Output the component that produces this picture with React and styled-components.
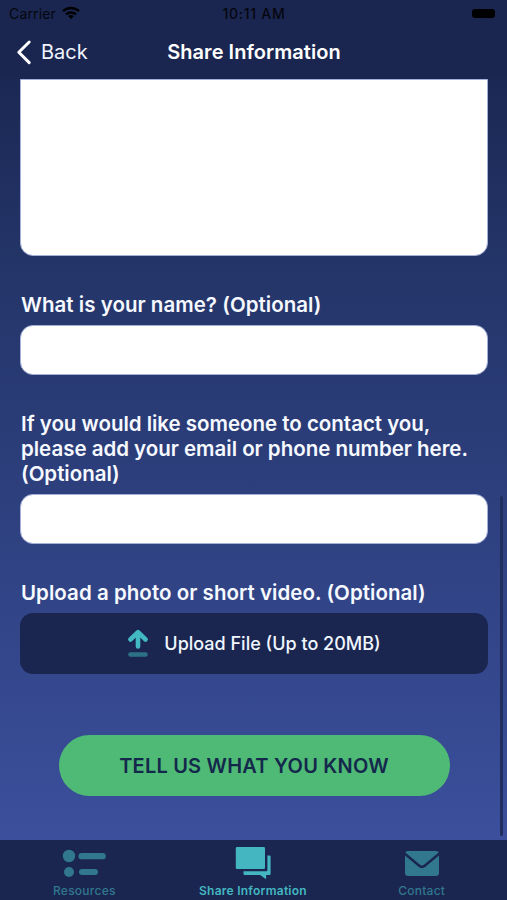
import React from 'react';
import styled, { createGlobalStyle } from 'styled-components';

const navy = '#1a264f';
const teal = '#43b6c1';
const mutedTeal = '#31788f';

const GlobalStyle = createGlobalStyle`
  * {
    box-sizing: border-box;
  }

  body {
    margin: 0;
    background: ${navy};
    font-family: Inter, "Liberation Sans", sans-serif;
  }
`;

const Screen = styled.div`
  display: flex;
  flex-direction: column;
  width: 507px;
  height: 900px;
  overflow: hidden;

  background: linear-gradient(#1b2854 79px, #243569 270px, #3b4f9c 840px);
`;

const StatusBar = styled.div`
  display: grid;
  grid-template-columns: 1fr auto 1fr;
  align-items: center;
  height: 28px;
  padding: 0 10px 2px 9px;

  color: #05070f;
  background: ${navy};
  font-size: 14px;
`;

const Carrier = styled.div`
  display: flex;
  align-items: center;
  gap: 6px;

  letter-spacing: 0.15px;
`;

const Clock = styled.div`
  padding-left: 2px;

  font-weight: 500;
  letter-spacing: 0.75px;
`;

const Battery = styled.div`
  justify-self: end;
  width: 23px;
  height: 9px;
  margin-right: 2px;

  border-radius: 3px;
  background: #000;
`;

const NavBar = styled.header`
  display: grid;
  grid-template-columns: 1fr auto 1fr;
  align-items: center;
  height: 51px;
  padding: 0 15px 3px 16px;

  color: #fff;
  background: ${navy};
`;

const BackButton = styled.button`
  display: flex;
  align-items: center;
  gap: 7px;
  padding: 0;

  border: 0;
  color: #f0f4ff;
  background: transparent;
  font: inherit;
  font-size: 20px;
  line-height: 26px;
`;

const Title = styled.h1`
  margin: 0;

  font-size: 20px;
  font-weight: 600;
  line-height: 26px;
  letter-spacing: 0.05px;
`;

const Content = styled.main`
  position: relative;
  flex: 1;
  display: flex;
  flex-direction: column;
  padding: 0 19px 0 20px;
`;

const Message = styled.textarea`
  display: block;
  width: 100%;
  height: 177px;
  padding: 12px;

  border: 1px solid #a5b0d8;
  border-radius: 0 0 13px 13px;
  background: #fff;
  resize: none;
`;

const Field = styled.div`
  display: flex;
  flex-direction: column;
  gap: 7px;
  margin-top: 37.2px;
`;

const Label = styled.label`
  padding-left: 1px;

  color: #f6f9ff;
  font-size: 20.5px;
  font-weight: 600;
  line-height: 24.8px;
  letter-spacing: ${props => props.$spacing || '0'};
`;

const Input = styled.input`
  width: 100%;
  height: 50px;
  padding: 0 12px;

  border: 1px solid #a5b0d8;
  border-radius: 13px;
  background: #fff;
`;

const UploadButton = styled.button`
  display: flex;
  align-items: center;
  justify-content: center;
  gap: 15px;
  height: 61px;

  border: 0;
  border-radius: 13px;
  color: #f0f6ff;
  background: ${navy};
  font: inherit;
  font-size: 18px;
  font-weight: 500;
`;

const SubmitButton = styled.button`
  align-self: center;
  width: 391px;
  height: 61px;
  margin-top: 61.4px;
  padding: 2px 0 0;

  border: 0;
  border-radius: 31px;
  color: #14284c;
  background: #4fba75;
  font: inherit;
  font-size: 20px;
  font-weight: 600;
  letter-spacing: 0.2px;
`;

const ScrollThumb = styled.div`
  position: absolute;
  right: 4px;
  bottom: 4px;
  width: 3.5px;
  height: 340px;

  border-radius: 2px;
  background: #202f60;
`;

const TabBar = styled.nav`
  display: grid;
  grid-template-columns: repeat(3, 1fr);
  height: 60px;
  padding-right: 1px;

  background: ${navy};
`;

const Tab = styled.button`
  display: flex;
  flex-direction: column;
  align-items: center;
  padding: 4px 0 0;

  border: 0;
  color: ${props => (props.$active ? teal : mutedTeal)};
  background: transparent;
  font: inherit;
  font-size: 12px;
  font-weight: ${props => (props.$active ? 600 : 500)};
  line-height: 16px;
  letter-spacing: 0.25px;

  svg {
    display: block;
    margin-bottom: 1px;
    flex-shrink: 0;
  }
`;

function WifiIcon() {
  return (
    <svg width="18" height="14" viewBox="0 0 18 14" fill="none" stroke="#000" strokeWidth="2.5">
      <path d="M1 5.2C5.6 .9 12.4 .9 17 5.2" />
      <path d="M4 8.4C6.8 5.8 11.2 5.8 14 8.4" />
      <path d="M9 13 6.2 10.2C7.8 8.7 10.2 8.7 11.8 10.2Z" fill="#000" stroke="none" />
    </svg>
  );
}

function ChevronIcon() {
  return (
    <svg width="18" height="26" viewBox="0 0 18 26" fill="none">
      <path d="M13.2 3 2.8 13.2 13.2 23.6" stroke="#fff" strokeWidth="3" strokeLinecap="round" strokeLinejoin="round" />
    </svg>
  );
}

function UploadIcon() {
  return (
    <svg width="22" height="30" viewBox="0 0 22 30" fill="none" strokeLinecap="round" strokeLinejoin="round">
      <path d="M11 4.2V18.4M3.4 11.5 11 4.2 18.6 11.5" stroke="#42b8c3" strokeWidth="4.6" />
      <path d="M3.5 26.5H18.5" stroke="#2d7187" strokeWidth="4.6" />
    </svg>
  );
}

function ListIcon() {
  return (
    <svg width="44" height="38" viewBox="0 0 44 38" fill={mutedTeal}>
      <circle cx="7" cy="12" r="6.2" />
      <rect x="16.5" y="9" width="27.3" height="6.3" rx="3.15" />
      <circle cx="7" cy="28" r="5" />
      <rect x="17" y="25" width="19" height="6" rx="3" />
    </svg>
  );
}

function ChatIcon() {
  return (
    <svg width="36" height="38" viewBox="0 0 36 38" fill={teal}>
      <rect x=".8" y="3" width="29.2" height="22" rx="1.2" />
      <path d="M32.4 11.5H34.4Q35.6 11.5 35.6 12.7V29.8Q35.6 31 34.4 31H31.1V35.2L25.2 31H9.7Q8.5 31 8.5 29.8V27.2H31.4Q32.4 27.2 32.4 26.2Z" />
    </svg>
  );
}

function MailIcon() {
  return (
    <svg width="34" height="38" viewBox="0 0 34 38">
      <rect y="7" width="34" height="25" rx="3" fill={mutedTeal} />
      <path d="M-1 9 14.3 21.8Q17 24 19.7 21.8L35 9" fill="none" stroke={navy} strokeWidth="2.5" />
    </svg>
  );
}

function TextField({ id, label, spacing }) {
  return (
    <Field>
      <Label htmlFor={id} $spacing={spacing}>
        {label}
      </Label>
      <Input id={id} />
    </Field>
  );
}

function App() {
  return (
    <Screen>
      <GlobalStyle />
      <StatusBar>
        <Carrier>
          Carrier
          <WifiIcon />
        </Carrier>
        <Clock>10:11 AM</Clock>
        <Battery />
      </StatusBar>
      <NavBar>
        <BackButton>
          <ChevronIcon />
          Back
        </BackButton>
        <Title>Share Information</Title>
      </NavBar>
      <Content>
        <Message aria-label="Message" />
        <TextField id="name" label="What is your name? (Optional)" spacing="0.03px" />
        <TextField
          id="contact"
          label="If you would like someone to contact you, please add your email or phone number here. (Optional)"
          spacing="-0.02px"
        />
        <Field>
          <Label as="div" $spacing="0.04px">
            Upload a photo or short video. (Optional)
          </Label>
          <UploadButton>
            <UploadIcon />
            Upload File (Up to 20MB)
          </UploadButton>
        </Field>
        <SubmitButton>TELL US WHAT YOU KNOW</SubmitButton>
        <ScrollThumb />
      </Content>
      <TabBar>
        <Tab>
          <ListIcon />
          Resources
        </Tab>
        <Tab $active>
          <ChatIcon />
          Share Information
        </Tab>
        <Tab>
          <MailIcon />
          Contact
        </Tab>
      </TabBar>
    </Screen>
  );
}

export default App;
